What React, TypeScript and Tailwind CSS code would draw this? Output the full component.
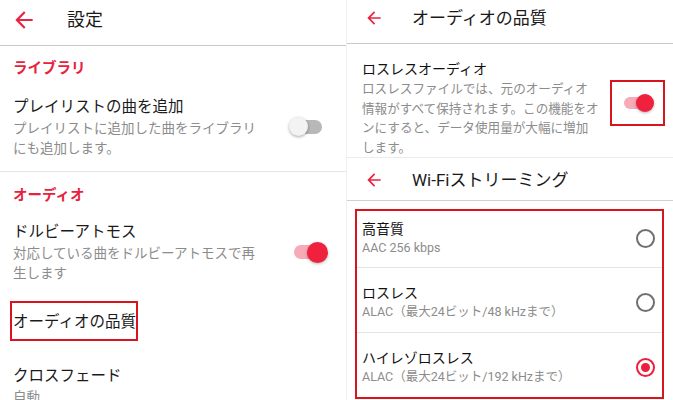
import React from 'react'

// Material-style back arrow used in both headers
function BackArrow({ className }: { className: string }) {
  return (
    <svg viewBox="0 0 24 24" className={className} fill="#ec2240">
      <path d="M20 11H7.83l5.59-5.59L12 4l-8 8 8 8 1.41-1.41L7.83 13H20v-2z" />
    </svg>
  )
}

function ToggleOff() {
  return (
    <div className="relative w-[34px] h-[20px]">
      <div className="absolute left-[4px] right-0 top-[3px] h-[14px] rounded-full bg-[#b8b8b8]" />
      <div className="absolute left-[1px] top-0 w-[19px] h-[19px] rounded-full bg-[#f3f3f3] shadow-[0_1px_3px_rgba(0,0,0,0.35)]" />
    </div>
  )
}

function ToggleOn({ small }: { small?: boolean }) {
  if (small) {
    return (
      <div className="relative w-[30px] h-[18px]">
        <div className="absolute left-0 right-[3px] top-[3px] h-[12px] rounded-full bg-[#f7aab7]" />
        <div className="absolute right-0 top-0 w-[18px] h-[18px] rounded-full bg-[#f0213d] shadow-[0_1px_3px_rgba(0,0,0,0.3)]" />
      </div>
    )
  }
  return (
    <div className="relative w-[34px] h-[21px]">
      <div className="absolute left-0 right-[4px] top-[3px] h-[14px] rounded-full bg-[#f7aab7]" />
      <div className="absolute right-0 top-0 w-[21px] h-[21px] rounded-full bg-[#f0213d] shadow-[0_1px_3px_rgba(0,0,0,0.3)]" />
    </div>
  )
}

function Radio({ checked }: { checked?: boolean }) {
  if (checked) {
    return (
      <div className="w-[19px] h-[19px] rounded-full border-2 border-[#ec1f3c] flex items-center justify-center">
        <div className="w-[9px] h-[9px] rounded-full bg-[#ec1f3c]" />
      </div>
    )
  }
  return <div className="w-[19px] h-[19px] rounded-full border-2 border-[#6f6f6f]" />
}

const qualities = [
  { title: '高音質', sub: 'AAC 256 kbps', checked: false },
  { title: 'ロスレス', sub: 'ALAC（最大24ビット/48 kHzまで）', checked: false },
  { title: 'ハイレゾロスレス', sub: 'ALAC（最大24ビット/192 kHzまで）', checked: true },
]

export default function App() {
  return (
    <div className="w-[673px] h-[400px] overflow-hidden bg-white flex font-['Roboto','Noto_Sans_CJK_JP',sans-serif] text-[#1a1a1a]">
      {/* settings list */}
      <div className="w-[346px] shrink-0 flex flex-col">
        <div className="h-[46px] shrink-0 border-b border-[#c8c8c8] flex items-center pb-[6px]">
          <BackArrow className="ml-[11px] w-[26px] h-[26px]" />
          <span className="ml-[30px] text-[18px] leading-[24px]">設定</span>
        </div>

        <div className="pl-[13px] pt-[13px] pb-[13px] border-b border-[#e6e6e6]">
          <div className="text-[14.5px] leading-[20px] font-bold text-[#e8223d]">ライブラリ</div>
          <div className="mt-[17px] flex items-center">
            <div className="flex-1">
              <div className="text-[15.5px] leading-[22px]">プレイリストの曲を追加</div>
              <div className="text-[13.5px] leading-[20px] text-[#8c8c8c]">
                プレイリストに追加した曲をライブラリ
                <br />
                にも追加します。
              </div>
            </div>
            <div className="mr-[24px]">
              <ToggleOff />
            </div>
          </div>
        </div>

        <div className="pl-[13px] pt-[14px]">
          <div className="text-[14.5px] leading-[20px] font-bold text-[#e8223d]">オーディオ</div>
          <div className="mt-[15px] flex items-center">
            <div className="flex-1">
              <div className="text-[15.5px] leading-[22px]">ドルビーアトモス</div>
              <div className="text-[13.5px] leading-[20px] text-[#8c8c8c]">
                対応している曲をドルビーアトモスで再
                <br />
                生します
              </div>
            </div>
            <div className="mr-[18px]">
              <ToggleOn />
            </div>
          </div>
          <div className="mt-[18px] -ml-[3px] w-[128px] h-[40px] border-[2.5px] border-[#d8141f] flex items-center pl-[1px] pt-[2px]">
            <span className="text-[15.5px] leading-[22px] whitespace-nowrap">オーディオの品質</span>
          </div>
          <div className="mt-[24px] text-[15.5px] leading-[22px]">クロスフェード</div>
          <div className="text-[13.5px] leading-[20px] text-[#8c8c8c]">自動</div>
        </div>
      </div>

      {/* audio quality screen */}
      <div className="flex-1 flex flex-col border-l border-[#f0f0f0]">
        <div className="h-[44px] shrink-0 border-b border-[#c8c8c8] flex items-center pb-[8px]">
          <BackArrow className="ml-[17px] w-[20px] h-[20px]" />
          <span className="ml-[28px] text-[17px] leading-[24px]">オーディオの品質</span>
        </div>

        <div className="h-[113px] shrink-0 flex pl-[15px]">
          <div className="flex-1 pt-[15px]">
            <div className="text-[14px] leading-[20px] text-[#111]">ロスレスオーディオ</div>
            <div className="text-[12.6px] leading-[19.5px] text-[#8c8c8c] whitespace-nowrap">
              ロスレスファイルでは、元のオーディオ
              <br />
              情報がすべて保持されます。この機能をオ
              <br />
              ンにすると、データ使用量が大幅に増加
              <br />
              します。
            </div>
          </div>
          <div className="mt-[36px] mr-[8px] w-[55px] h-[46px] shrink-0 border-[2.5px] border-[#d8141f] flex items-center justify-end pr-[9px]">
            <ToggleOn small />
          </div>
        </div>

        <div className="h-[44px] shrink-0 border-t border-[#ececec] border-b border-b-[#d0d0d0] flex items-center pt-[1px]">
          <BackArrow className="ml-[17px] w-[20px] h-[20px]" />
          <span className="ml-[28px] text-[17px] leading-[24px]">Wi-Fiストリーミング</span>
        </div>

        <div className="mt-[8px] ml-[8px] mr-[9px] border-[2.5px] border-[#d8141f] flex flex-col">
          {qualities.map((q, i) => (
            <div
              key={q.title}
              className={
                i === 0
                  ? 'flex items-center pl-[5px] pr-[7px] pt-[8px] pb-[10px]'
                  : 'flex items-center pl-[5px] pr-[7px] pt-[15px] pb-[11px] border-t border-[#e3e3e3]'
              }
            >
              <div className="flex-1">
                <div className="text-[14px] leading-[20px] text-[#111]">{q.title}</div>
                <div className="text-[12.5px] leading-[18px] text-[#8c8c8c]">{q.sub}</div>
              </div>
              <Radio checked={q.checked} />
            </div>
          ))}
        </div>
      </div>
    </div>
  )
}
